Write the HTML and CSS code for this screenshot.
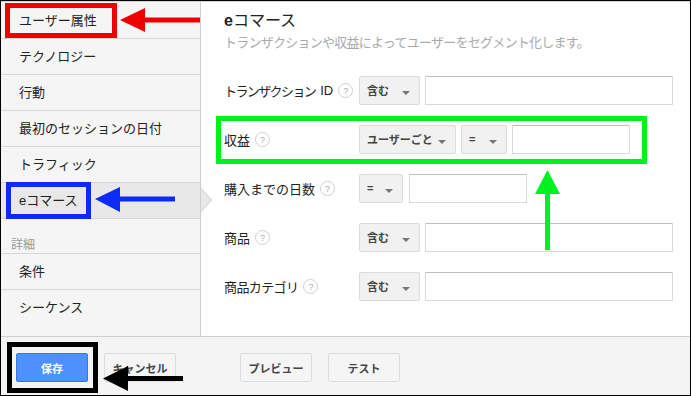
FILE: index.html
```html
<!DOCTYPE html>
<html lang="ja">
<head>
    <meta charset="UTF-8">
    <title>セグメント - eコマース</title>
    <link rel="stylesheet" href="styles.css">
</head>
<body>
    <div class="page">
        <div class="main">
            <ul class="sidebar">
                <li class="item">ユーザー属性</li>
                <li class="item">テクノロジー</li>
                <li class="item">行動</li>
                <li class="item">最初のセッションの日付</li>
                <li class="item">トラフィック</li>
                <li class="item active">eコマース</li>
                <li class="group">詳細</li>
                <li class="item">条件</li>
                <li class="item last">シーケンス</li>
            </ul>
            <div class="content">
                <h2 class="title"><b>e</b>コマース</h2>
                <p class="subtitle">トランザクションや収益によってユーザーをセグメント化します。</p>

                <div class="row">
                    <div class="label"><span class="tight">トランザクション</span><span class="id">ID</span><span class="help">?</span></div>
                    <div class="select w61">含む<span class="caret"></span></div>
                    <input class="field w248" type="text">
                </div>
                <div class="row">
                    <div class="label">収益<span class="help">?</span></div>
                    <div class="select w97">ユーザーごと<span class="caret"></span></div>
                    <div class="select w46">=<span class="caret"></span></div>
                    <input class="field w118" type="text">
                </div>
                <div class="row">
                    <div class="label">購入までの日数<span class="help">?</span></div>
                    <div class="select w44">=<span class="caret"></span></div>
                    <input class="field w118 gap6" type="text">
                </div>
                <div class="row">
                    <div class="label">商品<span class="help">?</span></div>
                    <div class="select w61">含む<span class="caret"></span></div>
                    <input class="field w248" type="text">
                </div>
                <div class="row">
                    <div class="label"><span class="narrow">商品カテゴリ</span><span class="help">?</span></div>
                    <div class="select w61">含む<span class="caret"></span></div>
                    <input class="field w248" type="text">
                </div>
            </div>
        </div>
        <div class="footer">
            <button class="btn primary">保存</button>
            <button class="btn">キャンセル</button>
            <button class="btn push">プレビュー</button>
            <button class="btn">テスト</button>
        </div>

        <!-- 注釈 -->
        <svg class="notes" width="691" height="396" viewBox="0 0 691 396">
            <rect x="7.5" y="5.5" width="107" height="30" fill="none" stroke="#ee0000" stroke-width="5"/>
            <polygon points="120,20 145,8 145,32" fill="#ee0000"/>
            <rect x="144" y="17.5" width="56" height="5" fill="#ee0000"/>

            <rect x="8.5" y="184.5" width="80" height="32" fill="none" stroke="#0a2cf5" stroke-width="5"/>
            <polygon points="95,199 120,187 120,212" fill="#0a2cf5"/>
            <rect x="119" y="196.5" width="56" height="5" fill="#0a2cf5"/>

            <rect x="218.5" y="118.5" width="426" height="43" fill="none" stroke="#00f020" stroke-width="5"/>
            <polygon points="547.5,170 535,194 560,194" fill="#00f020"/>
            <rect x="545" y="193" width="5" height="57" fill="#00f020"/>

            <rect x="9.5" y="344.5" width="86" height="46" fill="none" stroke="#000" stroke-width="5"/>
            <polygon points="103,378.5 128,366 128,391" fill="#000"/>
            <rect x="127" y="376" width="56" height="5" fill="#000"/>
        </svg>
    </div>
</body>
</html>
```
FILE: styles.css
```css
/* ページ全体 */
body {
    margin: 0;
    font-family: 'Liberation Sans', 'Noto Sans CJK JP', sans-serif;
    color: #222;
    background-color: #fff;
}

.page {
    position: relative;
    width: 691px;
    height: 396px;
    box-sizing: border-box;
    border: 1px solid #000;
    display: flex;
    flex-direction: column;
}

.main {
    flex: 1;
    display: flex;
    border-top: 1px solid #d4d4d4;
    min-height: 0;
}

/* サイドバー */
.sidebar {
    list-style: none;
    margin: 0;
    padding: 1px 0 0;
    width: 200px;
    box-sizing: border-box;
    background-color: #f5f5f5;
    border-right: 1px solid #cfcfcf;
}

.item {
    position: relative;
    height: 35px;
    line-height: 35px;
    padding-left: 18px;
    font-size: 13px;
    border-bottom: 1px solid #d6d6d6;
}

.item.last {
    border-bottom: none;
}

.item.active {
    background-color: #e8e8e8;
}

.item.active::before,
.item.active::after {
    content: "";
    position: absolute;
    width: 0;
    height: 0;
    border-style: solid;
    border-color: transparent;
}

.item.active::before {
    right: -12px;
    top: 5px;
    border-width: 12px 0 12px 11px;
    border-left-color: #c8c8c8;
}

.item.active::after {
    right: -11px;
    top: 6px;
    border-width: 11px 0 11px 10px;
    border-left-color: #e8e8e8;
}

.group {
    height: 35px;
    box-sizing: border-box;
    padding: 18px 0 0 10px;
    font-size: 12px;
    line-height: 16px;
    color: #999;
    border-bottom: 1px solid #d6d6d6;
}

/* コンテンツ */
.content {
    flex: 1;
    padding: 9px 17px 0 23px;
}

.title {
    margin: 0;
    font-size: 16px;
    font-weight: normal;
    line-height: 20px;
}

.subtitle {
    margin: 3px 0 24px;
    font-size: 13px;
    letter-spacing: -0.75px;
    line-height: 18px;
    color: #aaa;
}

.row {
    display: flex;
    align-items: center;
    height: 29px;
    margin-bottom: 20px;
}

.label {
    width: 135px;
    flex-shrink: 0;
    display: flex;
    align-items: center;
    font-size: 13px;
    white-space: nowrap;
}

.tight {
    letter-spacing: -1.6px;
}

.id {
    margin-left: 5px;
}

.narrow {
    letter-spacing: -0.6px;
}

.help {
    display: inline-flex;
    align-items: center;
    justify-content: center;
    width: 13px;
    height: 13px;
    margin-left: 5px;
    border: 1px solid #d0d0d0;
    border-radius: 50%;
    font-size: 9px;
    letter-spacing: 0;
    color: #aaa;
}

.select {
    position: relative;
    height: 29px;
    box-sizing: border-box;
    padding: 0 0 2px 7px;
    display: flex;
    align-items: center;
    background-color: #f1f1f1;
    border: 1px solid #dcdcdc;
    border-radius: 2px;
    font-size: 11px;
    font-weight: bold;
    color: #444;
    margin-right: 5px;
}

.caret {
    position: absolute;
    right: 9px;
    top: 14px;
    width: 0;
    height: 0;
    border-left: 4px solid transparent;
    border-right: 4px solid transparent;
    border-top: 4px solid #777;
}

.field {
    height: 29px;
    box-sizing: border-box;
    margin: 0;
    border: 1px solid #d9d9d9;
    border-top-color: #c0c0c0;
    border-radius: 1px;
    background-color: #fff;
}

.w44 { width: 44px; }
.w46 { width: 46px; }
.w61 { width: 61px; }
.w97 { width: 97px; }
.w118 { width: 118px; }
.w248 { width: 248px; }
.gap6 { margin-left: 1px; }

/* フッター */
.footer {
    height: 59px;
    box-sizing: border-box;
    border-top: 1px solid #cfcfcf;
    background-color: #f4f4f4;
    padding: 16px 0 0 15px;
    display: flex;
    align-items: flex-start;
    gap: 16px;
}

.btn {
    width: 72px;
    height: 29px;
    padding: 0;
    font-family: inherit;
    font-size: 11px;
    font-weight: bold;
    color: #444;
    background-color: #f5f5f5;
    border: 1px solid #dcdcdc;
    border-radius: 2px;
}

.btn.primary {
    color: #fff;
    background-color: #4d90fe;
    border-color: #3079ed;
}

.btn.push {
    margin-left: 48px;
}

/* 注釈レイヤー */
.notes {
    position: absolute;
    left: -1px;
    top: -1px;
    pointer-events: none;
}
```
